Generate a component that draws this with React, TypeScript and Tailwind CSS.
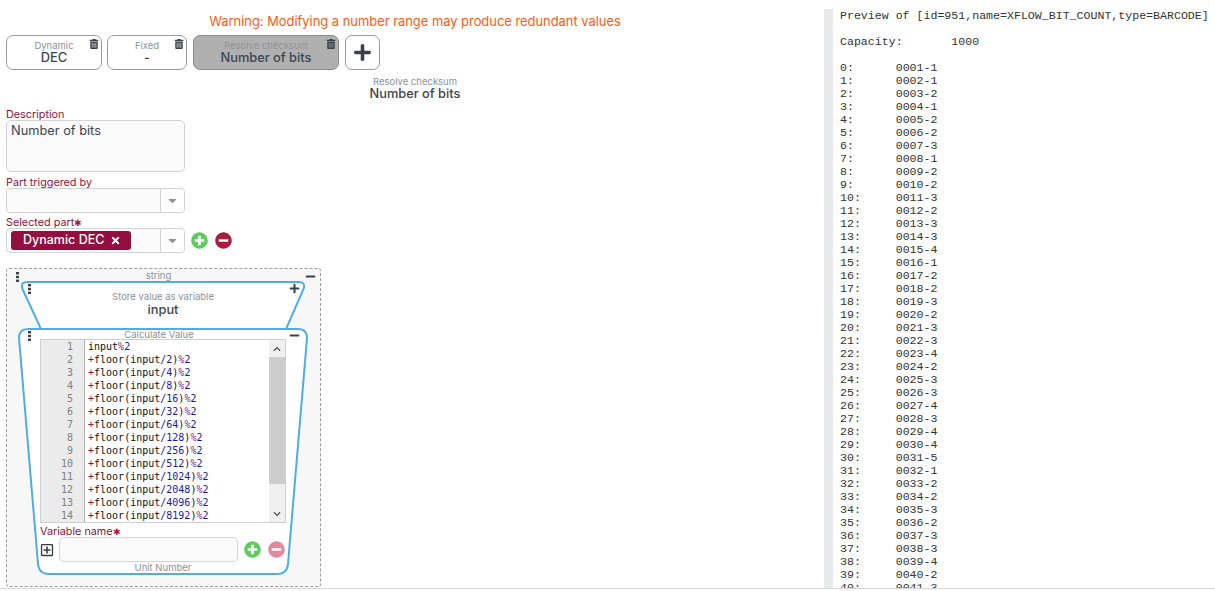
import React from 'react';
import { FaTrashAlt, FaPlus, FaMinus, FaPlusCircle, FaMinusCircle, FaCaretDown, FaTimes, FaRegPlusSquare, FaChevronUp, FaChevronDown } from 'react-icons/fa';

const popcount = (n: number) => n.toString(2).split('1').length - 1;

const previewRows = Array.from({ length: 41 }, (_, i) => `${i}:\t${String(i + 1).padStart(4, '0')}-${popcount(i + 1)}`).join('\n');
const previewText = `Preview of [id=951,name=XFLOW_BIT_COUNT,type=BARCODE]\n\nCapacity:\t1000\n\n${previewRows}`;

const divisors = [2, 4, 8, 16, 32, 64, 128, 256, 512, 1024, 2048, 4096, 8192];

const Tab: React.FC<{ kind: string; name: string; width: string; active?: boolean }> = ({ kind, name, width, active }) => (
    <div className={`relative h-[35px] ${width} rounded-[7px] border flex flex-col items-center justify-center pb-[2px] ${active ? 'bg-[#b0b0b0] border-[#8a8a8a]' : 'bg-white border-[#9a9a9a]'}`}>
        <span className={`text-[9.5px] leading-[11px] ${active ? 'text-[#8f959c]' : 'text-[#8b9299]'}`}>{kind}</span>
        <span className="text-[12.8px] leading-[13px] font-medium text-[#3c4650]">{name}</span>
        <FaTrashAlt className="absolute top-[3px] right-[2px] text-[10px] text-[#39424b]" />
    </div>
);

const Label: React.FC<{ text: string; required?: boolean }> = ({ text, required }) => (
    <div className="h-[12px] text-[10.8px] leading-[14px] text-[#8e1240]">
        {text}
        {required && <span className="text-[9px] text-[#a8163f]">✱</span>}
    </div>
);

const SelectBox: React.FC<{ children?: React.ReactNode }> = ({ children }) => (
    <div className="flex h-[25px] w-[179px] rounded-[4px] border border-[#d4d4d4] bg-[#fafafa]">
        <div className="flex flex-1 items-center px-1">{children}</div>
        <div className="flex w-[24px] items-center justify-center border-l border-[#d4d4d4] bg-white rounded-r-[4px]">
            <FaCaretDown className="text-[13px] text-[#8b9299]" />
        </div>
    </div>
);

const Grip: React.FC = () => (
    <svg width="3" height="10" viewBox="0 0 3 10" fill="#39424b">
        <rect x="0" y="0" width="3" height="2.4" />
        <rect x="0" y="3.8" width="3" height="2.4" />
        <rect x="0" y="7.6" width="3" height="2.4" />
    </svg>
);

const CodeLine: React.FC<{ n: number }> = ({ n }) => (
    <div className="h-[13px] whitespace-pre">
        <span className="text-[#93143f]">+</span>floor(input<span className="text-[#1a1aa6]">/{n}</span>)<span className="text-[#7a1a8c]">%</span><span className="text-[#1a1aa6]">2</span>
    </div>
);

const App: React.FC = () => {
    return (
        <div className="flex h-[591px] overflow-hidden bg-white font-['Inter',sans-serif]">
            <div className="h-[589px] w-[824px] shrink-0 border-b border-[#d8d8d8]">
                <div className="pl-[6px]">
                    <div className="pt-[13px] h-[35px] text-center text-[12.9px] leading-[17px] text-[#ff5a14]">
                        Warning: Modifying a number range may produce redundant values
                    </div>
                    <div className="flex gap-[5px]">
                        <Tab kind="Dynamic" name="DEC" width="w-[96px]" />
                        <Tab kind="Fixed" name="-" width="w-[80px]" />
                        <div className="ml-[1px]">
                            <Tab kind="Resolve checksum" name="Number of bits" width="w-[146px]" active />
                        </div>
                        <div className="ml-[1px] flex h-[35px] w-[35px] items-center justify-center rounded-[7px] border border-[#9a9a9a]">
                            <FaPlus className="text-[19px] text-[#39424b]" />
                        </div>
                    </div>
                    <div className="mt-[6px] text-center">
                        <div className="text-[9.5px] leading-[11px] text-[#8b9299]">Resolve checksum</div>
                        <div className="text-[12.8px] leading-[14px] font-medium text-[#3c4650]">Number of bits</div>
                    </div>

                    <div className="mt-[7px]"><Label text="Description" /></div>
                    <div className="h-[52px] w-[179px] rounded-[5px] border border-[#d4d4d4] bg-[#fafafa] px-[4px] py-[2px] text-[12.8px] leading-[16px] text-[#3c4650]">Number of bits</div>
                    <div className="mt-[4px]"><Label text="Part triggered by" /></div>
                    <SelectBox />
                    <div className="mt-[3px]"><Label text="Selected part" required /></div>
                    <div className="flex items-center">
                        <SelectBox>
                            <span className="flex h-[19px] w-[120px] items-center gap-[6px] rounded-[3px] bg-[#930f3f] pl-[12px] text-[12.5px] font-medium text-white">
                                Dynamic DEC <FaTimes className="text-[11px]" />
                            </span>
                        </SelectBox>
                        <FaPlusCircle className="ml-[6px] text-[17px] text-[#5fcb5f]" />
                        <FaMinusCircle className="ml-[7px] text-[17px] text-[#a91c3c]" />
                    </div>

                    <div className="relative mt-[15px] h-[319px] w-[315px] rounded-[3px] border border-dashed border-[#9c9c9c] bg-[#f7f7f7]">
                        <div className="absolute left-[9px] top-[3px] leading-[0]"><Grip /></div>
                        <FaMinus className="absolute right-[4px] top-[2px] text-[11px] text-[#39424b]" />
                        <div className="h-[12px] pr-[10px] text-center text-[9.5px] leading-[13px] text-[#8b9299]">string</div>

                        <div className="relative ml-[14px] h-[47px] w-[284px]">
                            <svg className="absolute left-0 top-0" width="284" height="47" viewBox="0 0 284 47" fill="none">
                                <path d="M19.5 47 L1.5 8 Q-1 1 7 1 H277 Q285 1 282.5 8 L265.5 47 Z" fill="#ffffff" />
                                <path d="M19.5 47 L1.5 8 Q-1 1 7 1 H277 Q285 1 282.5 8 L265.5 47" stroke="#4eaee3" strokeWidth="2" />
                            </svg>
                            <div className="absolute left-[7px] top-[3px] leading-[0]"><Grip /></div>
                            <FaPlus className="absolute right-[5px] top-[2px] text-[11px] text-[#39424b]" />
                            <div className="relative pt-[10px] text-center">
                                <div className="text-[9.5px] leading-[11px] text-[#8b9299]">Store value as variable</div>
                                <div className="text-[12.8px] leading-[15px] font-medium text-[#3c4650]">input</div>
                            </div>
                        </div>

                        <div className="relative ml-[11px] h-[248px] w-[290px]">
                            <svg className="absolute left-0 top-0" width="290" height="248" viewBox="0 0 290 248" fill="none">
                                <path d="M1 10 Q1 1 10 1 H280 Q289 1 289 10 L270 236 Q269 246 259 246 H31 Q21 246 20 236 Z" fill="#ffffff" stroke="#4eaee3" strokeWidth="2" />
                            </svg>
                            <div className="absolute left-[10px] top-[3px] leading-[0]"><Grip /></div>
                            <FaMinus className="absolute right-[8px] top-[2px] text-[11px] text-[#39424b]" />
                            <div className="relative flex flex-col items-center">
                                <div className="h-[11px] pr-[8px] pt-[1px] text-[9.5px] leading-[11px] text-[#8b9299]">Calculate Value</div>
                                <div className="flex h-[184px] w-[246px] overflow-hidden border border-[#cfcfcf] bg-white font-['DejaVu_Sans_Mono',monospace] text-[10px] leading-[13px] text-[#111111]">
                                    <div className="w-[44px] shrink-0 border-r border-[#b0b0b0] bg-[#ebebeb] pr-[11px] text-right text-[#808080]">
                                        {Array.from({ length: 14 }, (_, i) => <div key={i} className="h-[13px]">{i + 1}</div>)}
                                    </div>
                                    <div className="flex-1 pl-[3px]">
                                        <div className="h-[13px] whitespace-pre">input<span className="text-[#7a1a8c]">%</span><span className="text-[#1a1aa6]">2</span></div>
                                        {divisors.map((n) => <CodeLine key={n} n={n} />)}
                                    </div>
                                    <div className="flex w-[16px] shrink-0 flex-col bg-[#f0f0f0]">
                                        <div className="flex h-[17px] items-center justify-center"><FaChevronUp className="text-[8px] text-[#505050]" /></div>
                                        <div className="h-[127px] bg-[#cdcdcd]" />
                                        <div className="flex-1" />
                                        <div className="flex h-[17px] items-center justify-center"><FaChevronDown className="text-[8px] text-[#505050]" /></div>
                                    </div>
                                </div>
                                <div className="mt-[2px] w-[246px]"><Label text="Variable name" required /></div>
                                <div className="flex w-[246px] items-center">
                                    <FaRegPlusSquare className="text-[14px] text-[#333a40]" />
                                    <div className="ml-[5px] h-[25px] w-[179px] rounded-[5px] border border-[#d4d4d4] bg-[#fafafa]" />
                                    <FaPlusCircle className="ml-[6px] text-[17px] text-[#5fcb5f]" />
                                    <FaMinusCircle className="ml-[7px] text-[17px] text-[#e08a9e]" />
                                </div>
                                <div className="text-[9.5px] leading-[11px] text-[#8b9299]">Unit Number</div>
                            </div>
                        </div>
                    </div>
                </div>
            </div>
            <div className="flex h-[589px] flex-1 border-b border-[#d8d8d8] pt-[9px]">
                <div className="w-[9px] shrink-0 bg-[#e8e9eb]" />
                <pre className="ml-[7px] overflow-hidden font-['Liberation_Mono',monospace] text-[11.6px] leading-[13px] text-[#333333] [tab-size:8]">{previewText}</pre>
            </div>
        </div>
    );
};

export default App;
